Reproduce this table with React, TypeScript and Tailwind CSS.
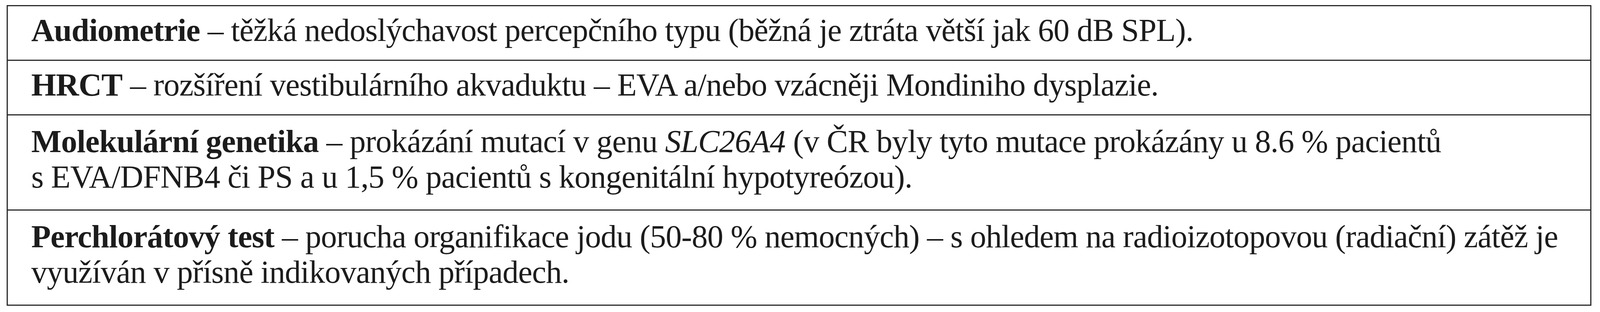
import React from 'react';

interface Row {
  label: string;
  lines: React.ReactNode[];
  tall?: boolean;
}

const rows: Row[] = [
  {
    label: 'Audiometrie',
    lines: [' – těžká nedoslýchavost percepčního typu (běžná je ztráta větší jak 60 dB SPL).'],
  },
  {
    label: 'HRCT',
    lines: [' – rozšíření vestibulárního akvaduktu – EVA a/nebo vzácněji Mondiniho dysplazie.'],
  },
  {
    label: 'Molekulární genetika',
    lines: [
      <>
        {' – prokázání mutací v genu '}
        <i>SLC26A4</i>
        {' (v ČR byly tyto mutace prokázány u 8.6 % pacientů'}
      </>,
      's EVA/DFNB4 či PS a u 1,5 % pacientů s kongenitální hypotyreózou).',
    ],
    tall: true,
  },
  {
    label: 'Perchlorátový test',
    lines: [
      ' – porucha organifikace jodu (50-80 % nemocných) – s ohledem na radioizotopovou (radiační) zátěž je',
      'využíván v přísně indikovaných případech.',
    ],
    tall: true,
  },
];

export default function App() {
  return (
    <div className="w-full h-[800px] overflow-hidden bg-white pt-[13px] pl-[17px] pr-[22px]">
      <div className="border-[3px] border-[#2b2b2b] font-['Liberation_Serif',serif] text-[82px] leading-[91px] tracking-[-0.9px] text-[#1c1c1c]">
        {rows.map((row, i) => (
          <div
            key={row.label}
            className={`pl-[60px] ${i > 0 ? 'border-t-[3px] border-[#2b2b2b]' : ''} ${
              row.tall ? 'pt-[21px] pb-[38px]' : 'pt-[16px] pb-[30px]'
            }`}
          >
            {row.lines.map((line, j) => (
              <div key={j} className="whitespace-nowrap">
                {j === 0 && <b className="font-bold">{row.label}</b>}
                {line}
              </div>
            ))}
          </div>
        ))}
      </div>
    </div>
  );
}
